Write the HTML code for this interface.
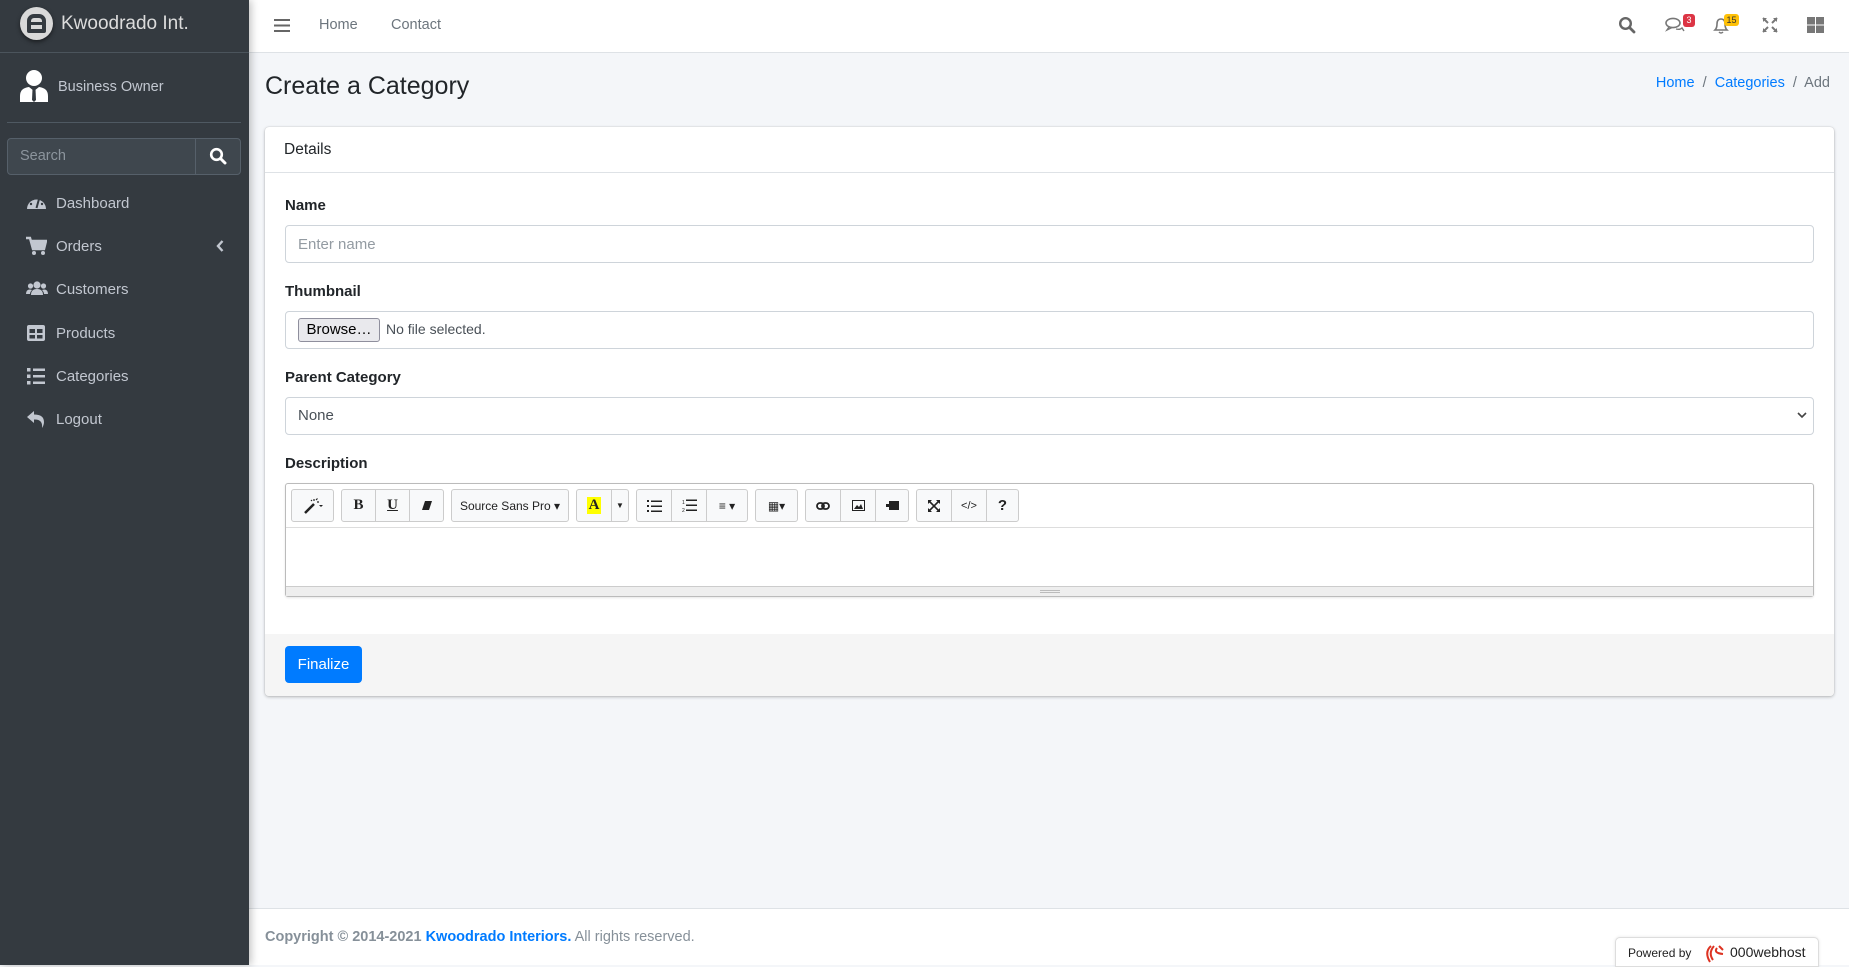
<!DOCTYPE html>
<html><head><meta charset="utf-8"><style>
*{box-sizing:border-box;margin:0;padding:0}
body{width:1849px;height:965px;overflow:hidden;background:#f4f6f9;font-family:"Liberation Sans",sans-serif;color:#212529;position:relative}
.a{position:absolute}
#sb{left:0;top:0;width:249px;height:965px;background:#343a40;box-shadow:2px 0 8px rgba(0,0,0,.25);z-index:5}
.nav{color:#c2c7d0;font-size:15px}
.nav div{position:absolute;left:0;width:249px;height:40px}
.nav span{position:absolute;left:56px;top:12px}
.nav svg{position:absolute;left:26px;top:10px}
#top{left:249px;top:0;width:1600px;height:53px;background:#fff;border-bottom:1px solid #dee2e6}
.card{left:265px;top:127px;width:1569px;height:569px;background:#fff;border-radius:4px;box-shadow:0 0 1px rgba(0,0,0,.2),0 1px 3px rgba(0,0,0,.25);overflow:hidden}
.lbl{font-weight:bold;font-size:15px;left:20px}
.inp{left:20px;width:1529px;height:38px;border:1px solid #ced4da;border-radius:4px;background:#fff;font-size:15px;color:#495057}
.tb{position:absolute;top:5px;height:33px;border:1px solid #ccc;border-radius:3px;background:#f8f9fa;display:flex}
.tb div{border-right:1px solid #ccc;height:31px;display:flex;align-items:center;justify-content:center;font-size:13px;color:#222;white-space:nowrap}
.tb div:last-child{border-right:none}
</style></head><body>
<div id="sb" class="a">
  <div class="a" style="left:20px;top:7px;width:33px;height:33px;border-radius:50%;background:#d9d9d9;box-shadow:0 2px 4px rgba(0,0,0,.5)"></div>
  <div class="a" style="left:27px;top:14px;width:19px;height:19px;border:4px solid #343a40;border-radius:7px 7px 2px 2px"></div>
  <div class="a" style="left:30px;top:22px;width:13px;height:3px;background:#343a40"></div>
  <div class="a" style="left:61px;top:13px;font-size:19px;color:#dcdcdc">Kwoodrado Int.</div>
  <div class="a" style="left:0;top:52px;width:249px;height:1px;background:#4b545c"></div>
  <svg class="a" style="left:19px;top:69px" width="30" height="33" viewBox="0 0 30 33"><circle cx="15" cy="9" r="8" fill="#fff"/><path d="M1 33 V27 Q1 19 10 18 L15 22 L20 18 Q29 19 29 27 V33Z" fill="#fff"/><path d="M13.5 20 L16.5 20 L17 31 L15 33 L13 31Z" fill="#343a40"/></svg>
  <div class="a" style="left:58px;top:79px;font-size:14.5px;color:#c2c7d0">Business Owner</div>
  <div class="a" style="left:7px;top:122px;width:234px;height:1px;background:#4f5962"></div>
  <div class="a" style="left:7px;top:138px;width:234px;height:37px;border:1px solid #56606a;border-radius:4px;background:#3f474e"></div>
  <div class="a" style="left:195px;top:139px;width:1px;height:35px;background:#56606a"></div>
  <div class="a" style="left:20px;top:148px;font-size:14.5px;color:#8c959d">Search</div>
  <svg class="a" style="left:209px;top:147px" width="18" height="18" viewBox="0 0 18 18"><circle cx="7.5" cy="7.5" r="5.3" fill="none" stroke="#fff" stroke-width="2.6"/><path d="M11.5 11.5 L16 16" stroke="#fff" stroke-width="3" stroke-linecap="round"/></svg>
  <div class="nav">
    <div style="top:183px"><svg width="21" height="20" viewBox="0 0 21 20"><path d="M1 16 A9.5 9.5 0 1 1 20 16 Z" fill="#c2c7d0"/><path d="M10.5 15 L13 6" stroke="#343a40" stroke-width="2"/><circle cx="5" cy="11" r="1.2" fill="#343a40"/><circle cx="7" cy="6" r="1.2" fill="#343a40"/><circle cx="16" cy="11" r="1.2" fill="#343a40"/></svg><span>Dashboard</span></div>
    <div style="top:226px"><svg width="21" height="20" viewBox="0 0 21 20"><path d="M0 2 H4 L7 13 H18 L20 5 H5" fill="none" stroke="#c2c7d0" stroke-width="2.4"/><path d="M5 5 H20 L18 12 H7Z" fill="#c2c7d0"/><circle cx="8" cy="17" r="2" fill="#c2c7d0"/><circle cx="17" cy="17" r="2" fill="#c2c7d0"/></svg><span>Orders</span><svg style="left:216px;top:14px" width="8" height="12" viewBox="0 0 8 12"><path d="M6.5 1 L2 6 L6.5 11" fill="none" stroke="#c2c7d0" stroke-width="2.4"/></svg></div>
    <div style="top:269px"><svg width="22" height="20" viewBox="0 0 22 20"><circle cx="11" cy="6" r="3.6" fill="#c2c7d0"/><circle cx="4.5" cy="7" r="2.6" fill="#c2c7d0"/><circle cx="17.5" cy="7" r="2.6" fill="#c2c7d0"/><path d="M5 16 Q5 10 11 10 Q17 10 17 16Z M0 15 Q0 10.5 4 10.5 L6 11 Q4 13 4 15Z M22 15 Q22 10.5 18 10.5 L16 11 Q18 13 18 15Z" fill="#c2c7d0"/></svg><span>Customers</span></div>
    <div style="top:313px"><svg width="20" height="20" viewBox="0 0 20 20"><rect x="1" y="2" width="18" height="16" rx="2" fill="#c2c7d0"/><rect x="3.5" y="6" width="5.5" height="4" fill="#343a40"/><rect x="11" y="6" width="5.5" height="4" fill="#343a40"/><rect x="3.5" y="12" width="5.5" height="3.5" fill="#343a40"/><rect x="11" y="12" width="5.5" height="3.5" fill="#343a40"/></svg><span>Products</span></div>
    <div style="top:356px"><svg width="20" height="20" viewBox="0 0 20 20"><rect x="1" y="2" width="3.5" height="3.5" fill="#c2c7d0"/><rect x="1" y="8.5" width="3.5" height="3.5" fill="#c2c7d0"/><rect x="1" y="15" width="3.5" height="3.5" fill="#c2c7d0"/><rect x="7" y="2.5" width="12" height="2.5" fill="#c2c7d0"/><rect x="7" y="9" width="12" height="2.5" fill="#c2c7d0"/><rect x="7" y="15.5" width="12" height="2.5" fill="#c2c7d0"/></svg><span>Categories</span></div>
    <div style="top:399px"><svg width="20" height="20" viewBox="0 0 20 20"><path d="M1 8 L8 2 V5.5 Q18 5.5 18 13 Q18 16 16 19 Q17 10 8 10.5 V14Z" fill="#c2c7d0"/></svg><span>Logout</span></div>
  </div>
</div>

<div id="top" class="a">
  <svg class="a" style="left:25px;top:18px" width="16" height="15" viewBox="0 0 16 15"><rect y="1" width="16" height="2" fill="#666"/><rect y="6.5" width="16" height="2" fill="#666"/><rect y="12" width="16" height="2" fill="#666"/></svg>
  <div class="a" style="left:70px;top:17px;font-size:14.5px;color:#6c757d">Home</div>
  <div class="a" style="left:142px;top:17px;font-size:14.5px;color:#6c757d">Contact</div>
  <svg class="a" style="left:1369px;top:16px" width="18" height="18" viewBox="0 0 18 18"><circle cx="7.5" cy="7.5" r="5.3" fill="none" stroke="#666" stroke-width="2.4"/><path d="M11.5 11.5 L16 16" stroke="#666" stroke-width="2.8" stroke-linecap="round"/></svg>
  <svg class="a" style="left:1416px;top:17px" width="20" height="16" viewBox="0 0 20 16"><ellipse cx="8" cy="6" rx="7" ry="4.6" fill="none" stroke="#777" stroke-width="1.6"/><path d="M4 10 L2 13 L7 10.5" fill="none" stroke="#777" stroke-width="1.4"/><path d="M11 12 Q15 13 17 11 L19 14" fill="none" stroke="#777" stroke-width="1.4"/></svg>
  <div class="a" style="left:1434px;top:14px;width:12px;height:13px;background:#dc3545;border-radius:3px;color:#fff;font-size:9px;text-align:center;line-height:13px">3</div>
  <svg class="a" style="left:1464px;top:16px" width="16" height="19" viewBox="0 0 16 19"><path d="M2 14 Q4 12 4 8 Q4 3 8 3 Q12 3 12 8 Q12 12 14 14Z" fill="none" stroke="#777" stroke-width="1.6"/><path d="M6 16 Q8 18 10 16" stroke="#777" fill="none" stroke-width="1.5"/></svg>
  <div class="a" style="left:1475px;top:14px;width:15px;height:12px;background:#ffc107;border-radius:3px;color:#333;font-size:9px;text-align:center;line-height:12px">15</div>
  <svg class="a" style="left:1513px;top:17px" width="16" height="16" viewBox="0 0 16 16"><path d="M1 1 L6 6 M15 1 L10 6 M1 15 L6 10 M15 15 L10 10" stroke="#777" stroke-width="2"/><path d="M1 1 H5 L1 5Z M15 1 H11 L15 5Z M1 15 H5 L1 11Z M15 15 H11 L15 11Z" fill="#777"/></svg>
  <svg class="a" style="left:1558px;top:17px" width="17" height="16" viewBox="0 0 17 16"><rect x="0" y="0" width="8" height="7.5" fill="#777"/><rect x="9" y="0" width="8" height="7.5" fill="#777"/><rect x="0" y="8.5" width="8" height="7.5" fill="#777"/><rect x="9" y="8.5" width="8" height="7.5" fill="#777"/></svg>
</div>

<div class="a" style="left:265px;top:72px;font-size:25px;color:#212529">Create a Category</div>
<div class="a" style="right:19px;top:75px;font-size:14.5px;color:#6c757d"><span style="color:#007bff">Home</span> &nbsp;/&nbsp; <span style="color:#007bff">Categories</span> &nbsp;/&nbsp; Add</div>

<div class="card a">
  <div class="a" style="left:0;top:0;width:100%;height:46px;border-bottom:1px solid #dee2e6"></div>
  <div class="a" style="left:19px;top:14px;font-size:15.5px">Details</div>
  <div class="lbl a" style="top:70px">Name</div>
  <div class="inp a" style="top:98px;padding:10px 12px;color:#939ba2">Enter name</div>
  <div class="lbl a" style="top:156px">Thumbnail</div>
  <div class="inp a" style="top:184px"><div class="a" style="left:12px;top:6px;width:82px;height:24px;border:1px solid #8f8f9d;border-radius:3px;background:#e9e9ed;font-size:15px;color:#000;text-align:center;line-height:22px">Browse…</div><div class="a" style="left:100px;top:9px;font-size:14px">No file selected.</div></div>
  <div class="lbl a" style="top:242px">Parent Category</div>
  <div class="inp a" style="top:270px;padding:9px 12px">None<svg class="a" style="right:6px;top:14px" width="10" height="7" viewBox="0 0 10 7"><path d="M1 1 L5 5 L9 1" fill="none" stroke="#444" stroke-width="1.6"/></svg></div>
  <div class="lbl a" style="top:328px">Description</div>
  <div class="a" style="left:20px;top:356px;width:1529px;height:114px;border:1px solid #bbb;border-radius:3px;box-shadow:0 1px 2px rgba(0,0,0,.1)">
    <div class="a" style="left:0;top:43px;width:100%;height:1px;background:#ddd"></div>
    <div class="a" style="left:0;bottom:0;width:100%;height:10px;background:#eee;border-top:1px solid #ccc"></div>
    <div class="a" style="left:754px;bottom:3px;width:20px;height:3px;border-top:1px solid #bbb;border-bottom:1px solid #bbb"></div>
    <div class="tb" style="left:5px;width:43px"><div style="width:41px"><svg width="20" height="16" viewBox="0 0 20 16"><path d="M2 15 L11 6" stroke="#222" stroke-width="2.5"/><path d="M11 1 V3 M14 4 H16 M13 2 L14.5 0.5 M9 3 L8 2" stroke="#222" stroke-width="1.2"/><path d="M16 7 L20 7 L18 9Z" fill="#222"/></svg></div></div>
    <div class="tb" style="left:55px;width:103px"><div style="width:34px;font-weight:bold;font-family:'Liberation Serif',serif;font-size:15px">B</div><div style="width:34px;text-decoration:underline;font-weight:bold;font-family:'Liberation Serif',serif;font-size:15px">U</div><div style="width:33px"><svg width="10" height="11" viewBox="0 0 10 11"><path d="M3 1 H10 L7 10 H0Z" fill="#222"/></svg></div></div>
    <div class="tb" style="left:165px;width:118px"><div style="width:116px;font-size:12px">Source Sans Pro ▾</div></div>
    <div class="tb" style="left:290px;width:53px"><div style="width:35px"><span style="background:#ff0;font-weight:bold;font-family:'Liberation Serif',serif;font-size:15px;padding:0 2px">A</span></div><div style="width:16px;font-size:8px">▼</div></div>
    <div class="tb" style="left:350px;width:112px"><div style="width:35px"><svg width="15" height="12"><g fill="#222"><rect y="0" width="2" height="2"/><rect y="5" width="2" height="2"/><rect y="10" width="2" height="2"/><rect x="4" y="0.5" width="11" height="1.5"/><rect x="4" y="5.5" width="11" height="1.5"/><rect x="4" y="10.5" width="11" height="1.5"/></g></svg></div><div style="width:35px"><svg width="15" height="13"><g fill="#222"><text x="0" y="5" font-size="5">1</text><text x="0" y="13" font-size="5">2</text><rect x="4" y="0.5" width="11" height="1.5"/><rect x="4" y="5.5" width="11" height="1.5"/><rect x="4" y="10.5" width="11" height="1.5"/></g></svg></div><div style="width:40px;font-size:12px">≡ ▾</div></div>
    <div class="tb" style="left:469px;width:43px"><div style="width:41px;font-size:12px">▦▾</div></div>
    <div class="tb" style="left:519px;width:104px"><div style="width:35px"><svg width="14" height="10" viewBox="0 0 14 10"><rect x="1" y="2" width="7" height="6" rx="3" fill="none" stroke="#222" stroke-width="1.8"/><rect x="6" y="2" width="7" height="6" rx="3" fill="none" stroke="#222" stroke-width="1.8"/></svg></div><div style="width:35px"><svg width="13" height="11"><rect x=".5" y=".5" width="12" height="10" fill="none" stroke="#222"/><path d="M2 9 L5 5 L7 7 L9 4 L11 9Z" fill="#222"/></svg></div><div style="width:32px"><svg width="13" height="9"><rect x="3" y="0" width="10" height="9" fill="#222"/><rect x="0" y="3" width="3" height="3" fill="#222"/></svg></div></div>
    <div class="tb" style="left:630px;width:103px"><div style="width:35px"><svg width="12" height="12" viewBox="0 0 12 12"><path d="M1 1 L11 11 M11 1 L1 11" stroke="#222" stroke-width="1.6"/><path d="M0 0 H4 L0 4Z M12 0 H8 L12 4Z M0 12 H4 L0 8Z M12 12 H8 L12 8Z" fill="#222"/></svg></div><div style="width:35px;font-size:11px">&lt;/&gt;</div><div style="width:31px;font-weight:bold;font-size:15px">?</div></div>
  </div>
  <div class="a" style="left:0;top:507px;width:100%;height:62px;background:#f5f5f5"></div>
  <div class="a" style="left:20px;top:519px;width:77px;height:37px;background:#007bff;border-radius:4px;color:#fff;font-size:15px;text-align:center;line-height:37px">Finalize</div>
</div>

<div class="a" style="left:249px;top:908px;width:1600px;height:57px;background:#fff;border-top:1px solid #dee2e6"></div>
<div class="a" style="left:265px;top:929px;font-size:14.5px;color:#869099"><b>Copyright © 2014-2021 <span style="color:#007bff">Kwoodrado Interiors.</span></b> All rights reserved.</div>
<div class="a" style="left:1615px;top:937px;width:204px;height:30px;background:#fff;border:1px solid #ddd;border-radius:5px 5px 0 0;box-shadow:0 0 3px rgba(0,0,0,.1)">
  <div class="a" style="left:12px;top:8px;font-size:12px;color:#222">Powered by</div>
  <svg class="a" style="left:87px;top:5px" width="22" height="20" viewBox="0 0 22 20"><path d="M8 3 Q1 9 7 19 M11 3 Q5 10 10 17 M14 5 Q10 10 20 11 M16 3 L20 7" fill="none" stroke="#d32" stroke-width="2"/></svg>
  <div class="a" style="left:114px;top:6px;font-size:14px;color:#222">000webhost</div>
</div>
</body></html>
